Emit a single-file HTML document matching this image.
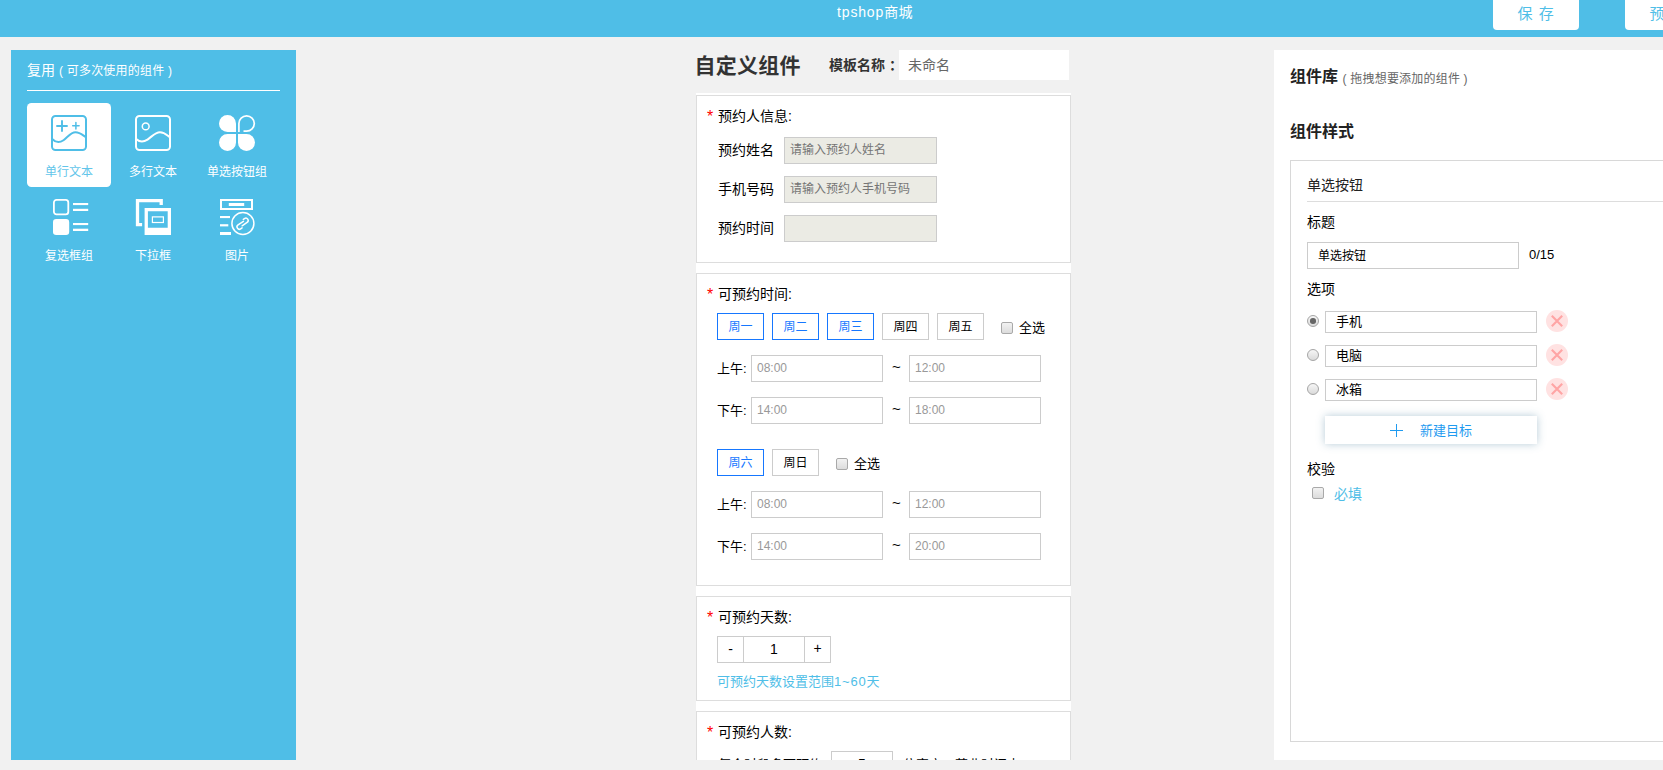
<!DOCTYPE html>
<html lang="zh-CN">
<head>
<meta charset="utf-8">
<title>tpshop商城 - 自定义组件</title>
<style>
*{box-sizing:border-box;margin:0;padding:0}
html,body{width:1663px;height:770px;overflow:hidden}
body{position:relative;background:#f1f1f1;font-family:"Liberation Sans","Noto Sans CJK SC",sans-serif;font-size:14px;color:#000;line-height:1}
.abs{position:absolute}
.t{position:absolute;white-space:nowrap;line-height:20px;height:20px}
/* header */
#hd{position:absolute;left:0;top:0;width:1663px;height:37px;background:#4fbee7}
#hd .ttl{left:837px;top:2px;font-size:14px;color:#fff;letter-spacing:.45px}
.hbtn{position:absolute;top:0;height:30px;background:#fff;border-radius:0 0 4px 4px;color:#4fbee7;font-size:15px;word-spacing:2px}
/* left */
#lp{position:absolute;left:11px;top:50px;width:285px;height:710px;background:#4fbee7;color:#fff}
#lp .hl{position:absolute;left:16px;top:40px;width:253px;height:1px;background:#fff}
.it{position:absolute;width:84px;height:84px;border-radius:4.5px;font-size:12px;color:#fff}
.it.on{background:#fff;color:#62c5ea}
.it svg{position:absolute;left:24px;top:12px;width:36px;height:36px;overflow:visible}
.it span{position:absolute;left:0;width:84px;top:59px;height:20px;line-height:20px;text-align:center;white-space:nowrap}
/* center */
#ct{position:absolute;left:696px;top:93px;width:375px;height:667px;background:#fff;overflow:hidden}
.card{position:absolute;left:0;width:375px;border:1px solid #ddd;background:#fff}
.star{color:#f00}
.ro{position:absolute;height:27px;border:1px solid #ccc;background:#ebebe4;font-size:12px;color:#757575;line-height:25px;padding-left:5px;white-space:nowrap}
.wk{position:absolute;width:47px;height:27px;border:1px solid #ccc;background:#fff;font-size:12px;line-height:25px;padding-top:1px;text-align:center;color:#000}
.wk.on{border-color:#1677ff;color:#1677ff}
.ti{position:absolute;width:132px;height:27px;border:1px solid #ccc;background:#fff;font-size:12px;color:#999;line-height:25px;padding-left:5px}
.cb{position:absolute;width:12px;height:12px;border:1px solid #a9a9a9;border-radius:2px;background:linear-gradient(#f2f2f2,#dcdcdc)}
/* right */
#rp{position:absolute;left:1274px;top:50px;width:400px;height:710px;background:#fff}
#bx{position:absolute;left:16px;top:110px;width:400px;height:582px;border:1px solid #d8d8d8;background:#fff}
.in{position:absolute;border:1px solid #ccc;background:#fff;white-space:nowrap}
.rd{position:absolute;width:12px;height:12px;border:1px solid #a5a5a5;border-radius:50%;background:linear-gradient(#f6f6f6,#dadada)}
.rd.on:after{content:"";position:absolute;left:2.2px;top:2.2px;width:5.6px;height:5.6px;border-radius:50%;background:#666}
.del{position:absolute;width:22px;height:22px;border-radius:50%;background:#ffe2e2}
.del svg{position:absolute;left:5px;top:5px;width:12px;height:12px}
</style>
</head>
<body>

<!-- HEADER -->
<div id="hd">
  <div class="t ttl"><span style="letter-spacing:.85px">tpshop</span>商城</div>
  <div class="hbtn" style="left:1493px;width:86px"><div class="t" style="left:24.5px;top:4px">保 存</div></div>
  <div class="hbtn" style="left:1625px;width:86px"><div class="t" style="left:24.5px;top:4px">预 览</div></div>
</div>

<!-- LEFT PANEL -->
<div id="lp">
  <div class="t" style="left:16px;top:10px;font-size:12px"><span style="font-size:14px">复用</span><span style="letter-spacing:.2px;position:relative;left:.5px"> ( 可多次使用的组件 )</span></div>
  <div class="hl"></div>
  <div class="it on" style="left:16px;top:53px">
    <svg viewBox="0 0 36 36" fill="none" stroke="#4fbee7" stroke-width="2" stroke-linecap="round" stroke-linejoin="round">
      <rect x="1" y="1" width="34" height="34" rx="3.5"/>
      <path d="M1.5 24.2C4.5 27.3 8 28.3 12.5 25.2C17 22 19.5 17.2 24.5 17.2C29 17.2 31.5 20 34.5 22"/>
      <path d="M6 11H16M11 6V16" stroke-width="1.9"/>
      <path d="M21.7 10.8H28.1M24.9 7.5V14" stroke-width="1.5"/>
    </svg>
    <span>单行文本</span>
  </div>
  <div class="it" style="left:100px;top:53px">
    <svg viewBox="0 0 36 36" fill="none" stroke="#fff" stroke-width="2" stroke-linecap="round" stroke-linejoin="round">
      <rect x="1" y="1" width="34" height="34" rx="3.5"/>
      <path d="M1.5 24.2C4.5 27 8 27.6 12.5 24.6C17 21.6 20 17.2 25 17.2C29.5 17.2 31.8 20 34.5 22"/>
      <circle cx="10.7" cy="11.4" r="3.4" stroke-width="1.5"/>
    </svg>
    <span>多行文本</span>
  </div>
  <div class="it" style="left:184px;top:53px">
    <svg viewBox="0 0 36 36" fill="#fff" stroke="none">
      <path d="M8.5 0A8.5 8.5 0 0 1 17 8.5V17H8.5A8.5 8.5 0 0 1 8.5 0Z"/>
      <path d="M8.5 36A8.5 8.5 0 0 1 8.5 19H17V27.5A8.5 8.5 0 0 1 8.5 36Z"/>
      <path d="M27.5 36A8.5 8.5 0 0 1 19 27.5V19H27.5A8.5 8.5 0 0 1 27.5 36Z"/>
      <path d="M19.9 17V8.5A7.7 7.7 0 1 1 27.6 16.2H24.5" fill="none" stroke="#fff" stroke-width="1.7"/>
    </svg>
    <span>单选按钮组</span>
  </div>
  <div class="it" style="left:16px;top:137px">
    <svg viewBox="0 0 36 36" fill="#fff" stroke="none" style="left:26px">
      <rect x="0.9" y="0.9" width="14.4" height="14.4" rx="2.6" fill="none" stroke="#fff" stroke-width="1.8"/>
      <rect x="0" y="20" width="16.2" height="16" rx="3.2"/>
      <rect x="20" y="4" width="15.2" height="2.1"/>
      <rect x="20" y="9.8" width="15.2" height="2.2"/>
      <rect x="20" y="24" width="15.2" height="2.1"/>
      <rect x="20" y="29.7" width="15.2" height="2.3"/>
    </svg>
    <span>复选框组</span>
  </div>
  <div class="it" style="left:100px;top:137px">
    <svg viewBox="0 0 36 36" fill="#fff" stroke="none">
      <path d="M26.2 6V1.7H2.5V25.7H7.1" fill="none" stroke="#fff" stroke-width="3.3"/>
      <path fill-rule="evenodd" d="M9.6 8.9H36V36H9.6ZM12.9 12.2V28.8H32.7V12.2Z"/>
      <rect x="17.4" y="17.9" width="11" height="5.6" fill="none" stroke="#fff" stroke-width="1.2"/>
    </svg>
    <span>下拉框</span>
  </div>
  <div class="it" style="left:184px;top:137px">
    <svg viewBox="0 0 36 36" fill="#fff" stroke="none">
      <rect x="2" y="1" width="31" height="9" fill="none" stroke="#fff" stroke-width="2"/>
      <rect x="9.8" y="4" width="15.4" height="3"/>
      <rect x="1" y="17" width="10" height="2.1"/>
      <rect x="1" y="25.2" width="8.3" height="2.2"/>
      <rect x="1" y="33" width="11" height="3"/>
      <circle cx="23.9" cy="24.5" r="11" fill="#4fbee7" stroke="#fff" stroke-width="1.5"/>
      <g transform="translate(24 24.5) rotate(-34)" fill="none" stroke="#fff" stroke-width="1.5" stroke-linecap="round">
        <path d="M-3.2 3.1H-4.9A2.35 2.35 0 0 1 -4.9 -1.6H1.6"/>
        <path d="M2.6 -3.3H4A2.35 2.35 0 0 1 4 1.4H-2"/>
      </g>
    </svg>
    <span>图片</span>
  </div>
</div>

<!-- CENTER -->
<div class="t" style="left:694.5px;top:53px;height:26px;line-height:26px;letter-spacing:.25px;font-size:21px;font-weight:bold;color:#333">自定义组件</div>
<div class="t" style="left:829px;top:55px;font-size:14px;font-weight:bold;color:#333">模板名称<span style="margin-left:4px">：</span></div>
<div class="abs" style="left:899px;top:50px;width:170px;height:30px;background:#fff"><div class="t" style="left:9px;top:5px;font-size:14px;color:#666">未命名</div></div>

<div id="ct">
  <div class="card" style="top:2px;height:168px">
  <div class="t star" style="left:10px;top:11px;font-size:16px">*</div><div class="t" style="left:21px;top:10px;font-size:14px">预约人信息:</div>
  <div class="t" style="left:21px;top:44px;font-size:14px">预约姓名</div>
  <div class="ro" style="left:87px;top:41px;width:153px">请输入预约人姓名</div>
  <div class="t" style="left:21px;top:83px;font-size:14px">手机号码</div>
  <div class="ro" style="left:87px;top:80px;width:153px">请输入预约人手机号码</div>
  <div class="t" style="left:21px;top:122px;font-size:14px">预约时间</div>
  <div class="ro" style="left:87px;top:119px;width:153px"></div>
  </div>
  <div class="card" style="top:180px;height:313px">
  <div class="t star" style="left:10px;top:11px;font-size:16px">*</div><div class="t" style="left:21px;top:10px;font-size:14px">可预约时间:</div>
  <div class="wk on" style="left:20px;top:39px">周一</div>
  <div class="wk on" style="left:75px;top:39px">周二</div>
  <div class="wk on" style="left:130px;top:39px">周三</div>
  <div class="wk" style="left:185px;top:39px">周四</div>
  <div class="wk" style="left:240px;top:39px">周五</div>
  <div class="cb" style="left:304px;top:48px"></div>
  <div class="t" style="left:322px;top:44px;font-size:13px">全选</div>
  <div class="t" style="left:20px;top:85px;font-size:13px">上午:</div>
  <div class="ti" style="left:54px;top:81px">08:00</div>
  <div class="t" style="left:195px;top:83px;font-size:15px">~</div>
  <div class="ti" style="left:212px;top:81px">12:00</div>
  <div class="t" style="left:20px;top:127px;font-size:13px">下午:</div>
  <div class="ti" style="left:54px;top:123px">14:00</div>
  <div class="t" style="left:195px;top:125px;font-size:15px">~</div>
  <div class="ti" style="left:212px;top:123px">18:00</div>
  <div class="wk on" style="left:20px;top:175px">周六</div>
  <div class="wk" style="left:75px;top:175px">周日</div>
  <div class="cb" style="left:139px;top:184px"></div>
  <div class="t" style="left:157px;top:180px;font-size:13px">全选</div>
  <div class="t" style="left:20px;top:221px;font-size:13px">上午:</div>
  <div class="ti" style="left:54px;top:217px">08:00</div>
  <div class="t" style="left:195px;top:219px;font-size:15px">~</div>
  <div class="ti" style="left:212px;top:217px">12:00</div>
  <div class="t" style="left:20px;top:263px;font-size:13px">下午:</div>
  <div class="ti" style="left:54px;top:259px">14:00</div>
  <div class="t" style="left:195px;top:261px;font-size:15px">~</div>
  <div class="ti" style="left:212px;top:259px">20:00</div>
  </div>
  <div class="card" style="top:503px;height:105px">
  <div class="t star" style="left:10px;top:11px;font-size:16px">*</div><div class="t" style="left:21px;top:10px;font-size:14px">可预约天数:</div>
  <div class="abs" style="left:20px;top:39px;width:114px;height:27px;border:1px solid #ccc;background:#fff"><div class="abs" style="left:25px;top:0;width:1px;height:25px;background:#ccc"></div><div class="abs" style="left:86px;top:0;width:1px;height:25px;background:#ccc"></div><div class="t" style="left:0;top:2px;width:25px;text-align:center;font-size:14px">-</div><div class="t" style="left:26px;top:2px;width:60px;text-align:center;font-size:14px">1</div><div class="t" style="left:87px;top:1px;width:25px;text-align:center;font-size:14px">+</div></div>
  <div class="t" style="left:20px;top:75px;font-size:13px;color:#4fbee7">可预约天数设置范围<span style="letter-spacing:.8px">1~60</span>天</div>
  </div>
  <div class="card" style="top:618px;height:120px">
  <div class="t star" style="left:10px;top:11px;font-size:16px">*</div><div class="t" style="left:21px;top:10px;font-size:14px">可预约人数:</div>
  <div class="t" style="left:21px;top:43px;font-size:13px">每个时段多可预约</div>
  <div class="abs" style="left:134px;top:39px;width:62px;height:27px;border:1px solid #ccc;background:#fff"><div class="t" style="left:0;top:2px;width:60px;text-align:center;font-size:14px">5</div></div>
  <div class="t" style="left:206px;top:43px;font-size:13px">位客户，营业时间内</div>
  </div>
</div>

<!-- RIGHT PANEL -->
<div id="rp">
  <div class="t" style="left:16px;top:17px;font-size:12px;color:#666"><span style="font-size:16px;font-weight:bold;color:#222">组件库</span><span style="position:relative;left:1px;top:1px;letter-spacing:.2px"> ( 拖拽想要添加的组件 )</span></div>
  <div class="t" style="left:16px;top:72px;font-size:16px;font-weight:bold;color:#222">组件样式</div>
  <div id="bx">
    <div class="t" style="left:16px;top:13.5px;font-size:14px;color:#222">单选按钮</div>
    <div class="abs" style="left:16px;top:40px;width:400px;height:1px;background:#ddd"></div>
    <div class="t" style="left:16px;top:51px;font-size:14px">标题</div>
    <div class="in" style="left:16px;top:81px;width:212px;height:27px"><div class="t" style="left:10px;top:3px;font-size:12px">单选按钮</div></div>
    <div class="t" style="left:238px;top:83.5px;font-size:13px">0/15</div>
    <div class="t" style="left:16px;top:118px;font-size:14px">选项</div>
    <div class="rd on" style="left:16px;top:154px"></div>
    <div class="in" style="left:34px;top:150px;width:212px;height:22px"><div class="t" style="left:10px;top:0;font-size:13px">手机</div></div>
    <div class="del" style="left:255px;top:149px"><svg viewBox="0 0 12 12"><path d="M0.8 0.8L11.2 11.2M11.2 0.8L0.8 11.2" stroke="#ffa5a5" stroke-width="2.1" fill="none"/></svg></div>
    <div class="rd" style="left:16px;top:188px"></div>
    <div class="in" style="left:34px;top:184px;width:212px;height:22px"><div class="t" style="left:10px;top:0;font-size:13px">电脑</div></div>
    <div class="del" style="left:255px;top:183px"><svg viewBox="0 0 12 12"><path d="M0.8 0.8L11.2 11.2M11.2 0.8L0.8 11.2" stroke="#ffa5a5" stroke-width="2.1" fill="none"/></svg></div>
    <div class="rd" style="left:16px;top:222px"></div>
    <div class="in" style="left:34px;top:218px;width:212px;height:22px"><div class="t" style="left:10px;top:0;font-size:13px">冰箱</div></div>
    <div class="del" style="left:255px;top:217px"><svg viewBox="0 0 12 12"><path d="M0.8 0.8L11.2 11.2M11.2 0.8L0.8 11.2" stroke="#ffa5a5" stroke-width="2.1" fill="none"/></svg></div>
    <div class="abs" style="left:34px;top:255px;width:212px;height:28px;background:#fff;box-shadow:0 0 9px rgba(80,130,160,.42)"><svg class="abs" style="left:65px;top:8px;width:13px;height:13px" viewBox="0 0 13 13"><path d="M6.5 0V13M0 6.5H13" stroke="#1f9bf0" stroke-width="1" fill="none"/></svg><div class="t" style="left:95px;top:5px;font-size:13px;color:#1f9bf0">新建目标</div></div>
    <div class="t" style="left:16px;top:298px;font-size:14px">校验</div>
    <div class="cb" style="left:21px;top:326px"></div>
    <div class="t" style="left:43px;top:322.5px;font-size:14px;color:#4fbee7">必填</div>
  </div>
</div>

</body>
</html>
